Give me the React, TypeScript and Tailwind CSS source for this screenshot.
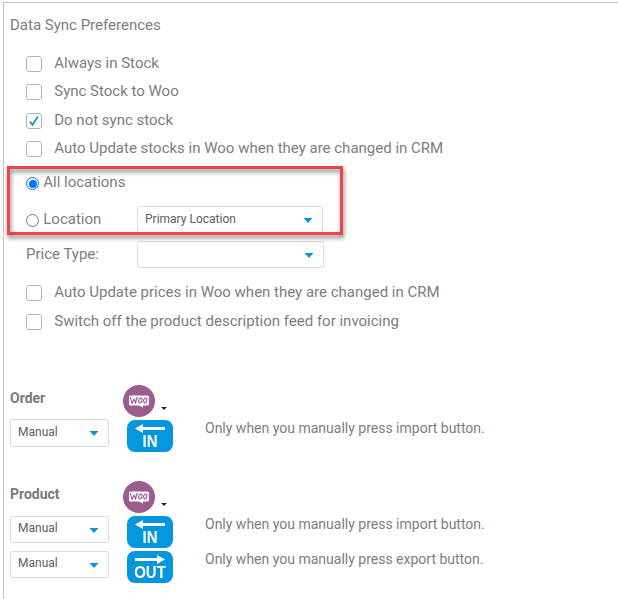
import clsx from "clsx";

const CheckRow = ({ label, checked, className }: { label: string; checked?: boolean; className?: string }) => (
  <label className={clsx("flex h-7 items-center pl-[22px]", className)}>
    <span className="mt-0.5 flex size-4 shrink-0 items-center justify-center rounded-[3px] border border-[#b4b4b8] bg-white">
      {checked && (
        <svg viewBox="0 0 12 12" className="size-3" fill="none" stroke="#1b87cf" strokeWidth="1.7">
          <path d="M1.8 6.6 4.6 9.8 9.9 1.4" />
        </svg>
      )}
    </span>
    <span className="ml-[12.25px]">{label}</span>
  </label>
);

const Radio = ({ checked }: { checked?: boolean }) => (
  <span
    className={clsx(
      "mt-[3px] flex size-[13px] shrink-0 items-center justify-center rounded-full border bg-white",
      checked ? "border-[#0075ff]" : "border-[#767676]"
    )}
  >
    {checked && <span className="size-[8px] rounded-full bg-[#0075ff]" />}
  </span>
);

const Select = ({ value, className }: { value?: string; className?: string }) => (
  <div
    className={clsx(
      "flex shrink-0 items-center justify-between rounded-[2px] border border-[#dcdce0] bg-white pl-[7px] pr-2.5 text-[12px] text-[#606060]",
      className
    )}
  >
    <span className="-mt-[3px]">{value}</span>
    <svg viewBox="0 0 8 5" className="mt-px h-[5px] w-2" fill="#0c93d6">
      <path d="M-.5 0h9L4 5z" />
    </svg>
  </div>
);

const Direction = ({ type }: { type: "IN" | "OUT" }) => (
  <div className="flex h-8 w-[46px] shrink-0 flex-col items-center rounded-lg bg-[#0696dc] pt-1 text-white">
    <svg viewBox="0 0 30 9" className={clsx("h-[9px] w-[30px] shrink-0", type === "OUT" && "-scale-x-100")} fill="#fff">
      <path d="M0 4.5 8 0v3h22v3H8v3z" />
    </svg>
    <span className="origin-bottom scale-y-110 font-['Liberation_Sans',sans-serif] text-[15px] leading-[17px] font-bold">
      {type}
    </span>
  </div>
);

const WooLogo = () => (
  <svg viewBox="0 0 32 32" className="size-8 shrink-0">
    <circle cx="16" cy="16" r="16" fill="#9b5c8f" />
    <path d="M7.5 10.5h17a1.5 1.5 0 0 1 1.5 1.5v7a1.5 1.5 0 0 1-1.5 1.5h-5l.8 2.2-4.3-2.2H7.5A1.5 1.5 0 0 1 6 19v-7a1.5 1.5 0 0 1 1.5-1.5z" fill="#fff" />
    <g fill="none" stroke="#9b5c8f" strokeWidth="1.15" strokeLinecap="round" strokeLinejoin="round">
      <path d="M7.6 12.6 9 18.4l2.2-4.2 1.4 4.2q.3-3.6 1.7-6" />
      <ellipse cx="17.4" cy="15.4" rx="1.6" ry="2.5" transform="rotate(12 17.4 15.4)" />
      <ellipse cx="22.3" cy="15.4" rx="1.6" ry="2.5" transform="rotate(12 22.3 15.4)" />
    </g>
  </svg>
);

const GroupHeader = ({ title }: { title: string }) => (
  <div className="flex h-8 pl-1.5">
    <h3 className="w-[113px] pt-[3px] text-[14px] leading-5 font-bold text-[#777b7e]">{title}</h3>
    <WooLogo />
    <svg viewBox="0 0 6 3" className="mt-[22px] ml-1.5 h-[3px] w-1.5" fill="#222">
      <path d="M0 0h6L3 3z" />
    </svg>
  </div>
);

const SyncRow = ({ type, text, selectClass }: { type: "IN" | "OUT"; text: string; selectClass: string }) => (
  <div className="mt-[3px] flex h-8 pl-1.5">
    <Select value="Manual" className={clsx("mr-[18px] w-[99px]", selectClass)} />
    <Direction type={type} />
    <p className="ml-8 text-[14px] leading-4 whitespace-nowrap">{text}</p>
  </div>
);

export default function App() {
  return (
    <div className="h-[599px] w-[618px] overflow-hidden bg-white pt-0.5 pl-[3px] font-[Roboto,sans-serif] text-[15px] text-[#7b7e81]">
      <section className="h-[597px] border-t border-l border-[#c4c4c6]">
        <h2 className="pt-2.5 pl-1.5 leading-6">Data Sync Preferences</h2>

        <div className="mt-3">
          <CheckRow label="Always in Stock" />
          <CheckRow label="Sync Stock to Woo" />
          <CheckRow label="Do not sync stock" checked className="mt-px" />
          <CheckRow label="Auto Update stocks in Woo when they are changed in CRM" />
        </div>

        <div className="relative mt-1 ml-[3px] h-[69px] w-[336px]">
          <div className="flex h-8 items-center pl-[19px]">
            <Radio checked />
            <span className="ml-[4.25px]">All locations</span>
          </div>
          <div className="mt-[5px] flex h-8 items-center pl-[19px]">
            <Radio />
            <span className="ml-[4.25px] w-[93.75px]">Location</span>
            <Select value="Primary Location" className="mt-0.5 h-7 w-[186px]" />
          </div>
          {/* highlighted area */}
          <div className="absolute inset-0 border-3 border-[#ee4547] drop-shadow-[1px_3px_2px_rgba(0,0,0,0.5)]" />
        </div>

        <div className="mt-1.5 flex h-7 items-center pl-[22px]">
          <span className="-mt-0.5 w-[111px]">Price Type:</span>
          <Select className="-mt-px h-[27px] w-[187px]" />
        </div>

        <div className="mt-[9px]">
          <CheckRow label="Auto Update prices in Woo when they are changed in CRM" />
          <CheckRow label="Switch off the product description feed for invoicing" className="mt-px" />
        </div>

        <div className="mt-[50px]">
          <GroupHeader title="Order" />
          <SyncRow type="IN" text="Only when you manually press import button." selectClass="-mt-px h-7" />
        </div>

        <div className="mt-[29px]">
          <GroupHeader title="Product" />
          <SyncRow type="IN" text="Only when you manually press import button." selectClass="h-[27px]" />
          <SyncRow type="OUT" text="Only when you manually press export button." selectClass="h-[27px]" />
        </div>
      </section>
    </div>
  );
}
